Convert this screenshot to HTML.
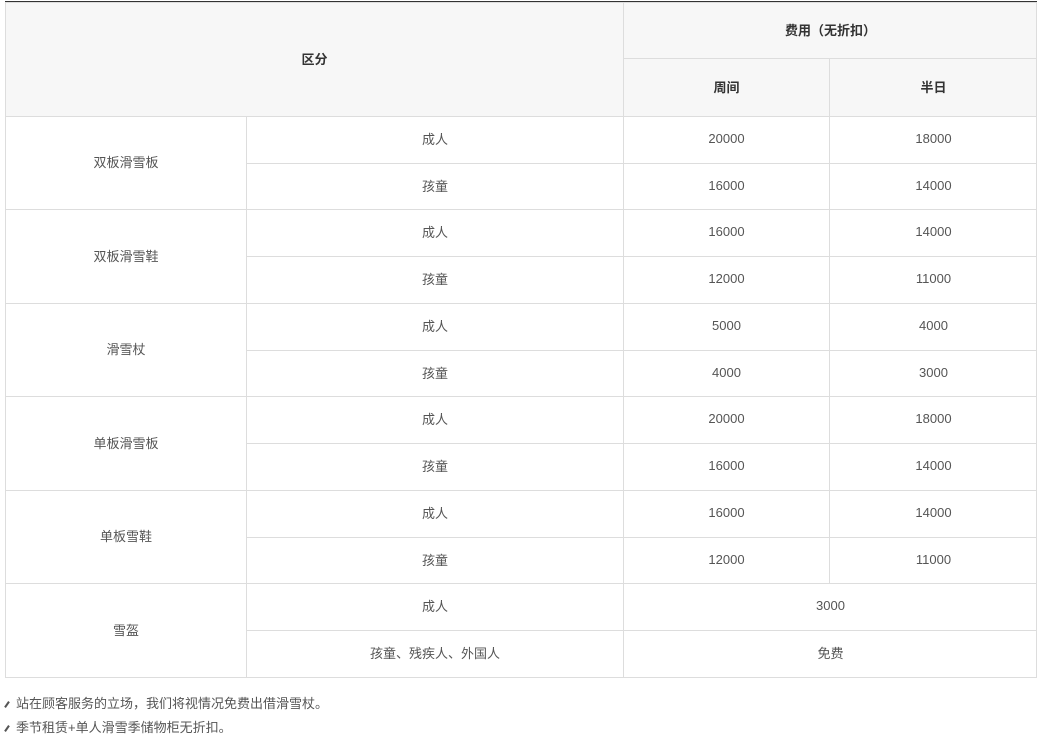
<!DOCTYPE html>
<html><head><meta charset="utf-8"><style>
body{margin:0;background:#fff;width:1041px;height:744px;position:relative;overflow:hidden;font-family:"Liberation Sans","Noto Sans CJK SC",sans-serif;font-size:13px;color:#555}
.c{position:absolute;display:flex;align-items:center;justify-content:center;box-sizing:border-box;border-left:1px solid #ddd;border-top:1px solid #ddd;padding-bottom:3px}
.h{background:#f7f7f7;font-weight:bold;color:#333}
.n{position:absolute;left:6px;font-size:13px;color:#555}
.n i{display:inline-block;width:2px;height:7px;background:#555;transform:rotate(35deg);margin-right:8px;vertical-align:0px}
</style></head><body>
<div style="position:absolute;left:5px;top:1px;width:1032px;height:2px;background:#333"></div>
<div class="c h" style="left:5px;top:2px;width:618px;height:114px">区分</div>
<div class="c h" style="left:623px;top:2px;width:414px;height:56px">费用（无折扣）</div>
<div class="c h" style="left:623px;top:58px;width:206px;height:58px">周间</div>
<div class="c h" style="left:829px;top:58px;width:208px;height:58px">半日</div>
<div id="rows"></div>
<div style="position:absolute;left:5px;top:677px;width:1032px;height:1px;background:#ddd"></div>
<div style="position:absolute;left:1036px;top:2px;width:1px;height:676px;background:#ddd"></div>
<div class="n" style="top:693px"><i></i>站在顾客服务的立场，我们将视情况免费出借滑雪杖。</div>
<div class="n" style="top:717px"><i></i>季节租赁+单人滑雪季储物柜无折扣。</div>
<script>
var y=[116,163,209,256,303,350,396,443,490,537,583,630,677];
var g=["双板滑雪板","双板滑雪鞋","滑雪杖","单板滑雪板","单板雪鞋","雪盔"];
var d=[["成人","20000","18000"],["孩童","16000","14000"],["成人","16000","14000"],["孩童","12000","11000"],["成人","5000","4000"],["孩童","4000","3000"],["成人","20000","18000"],["孩童","16000","14000"],["成人","16000","14000"],["孩童","12000","11000"]];
var h="";
function c(l,t,w,hh,s){h+='<div class="c" style="left:'+l+'px;top:'+t+'px;width:'+w+'px;height:'+hh+'px">'+s+'</div>';}
for(var i=0;i<6;i++)c(5,y[2*i],241,y[2*i+2]-y[2*i],g[i]);
for(var r=0;r<12;r++){var t=y[r],hh=y[r+1]-t;
 if(r<10){c(246,t,377,hh,d[r][0]);c(623,t,206,hh,d[r][1]);c(829,t,208,hh,d[r][2]);}
 else if(r==10){c(246,t,377,hh,"成人");c(623,t,414,hh,"3000");}
 else{c(246,t,377,hh,"孩童、残疾人、外国人");c(623,t,414,hh,"免费");}}
document.getElementById("rows").innerHTML=h;
</script>
</body></html>
